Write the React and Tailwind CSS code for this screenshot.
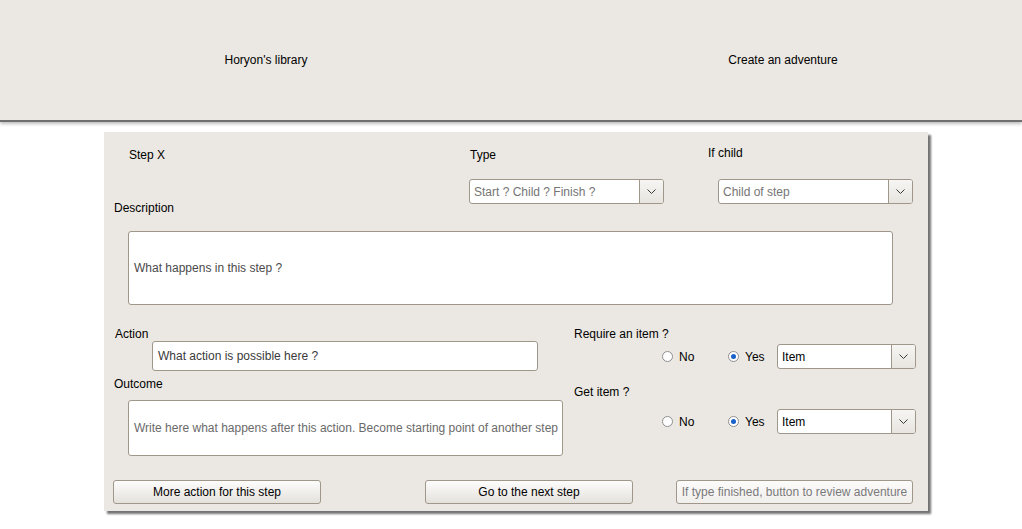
import React from "react";

const font = { fontFamily: '"Liberation Sans", Arial, sans-serif' };

function Chevron() {
  return (
    <svg width="9" height="6" viewBox="0 0 9 6" className="block">
      <path d="M0.5 0.5 L4.5 4.5 L8.5 0.5" fill="none" stroke="#3a3a3a" strokeWidth="1" />
    </svg>
  );
}

function Select({ text, w, muted }) {
  return (
    <div className={`flex h-[25px] ${w} overflow-hidden rounded-[3px] border border-[#a0978b] bg-white`}>
      <div className={`flex flex-1 items-center pl-[4px] text-[12px] ${muted ? "text-[#757575]" : "text-black"}`}>
        {text}
      </div>
      <div className="flex w-[24px] items-center justify-center border-l border-[#a0978b] bg-gradient-to-b from-[#f6f5f3] to-[#e8e5e0]">
        <Chevron />
      </div>
    </div>
  );
}

function Radio({ checked }) {
  return (
    <span className="flex h-[11px] w-[11px] items-center justify-center rounded-full border border-[#8f8f8f] bg-white">
      {checked && <span className="h-[5px] w-[5px] rounded-full bg-[#1a62c9]" />}
    </span>
  );
}

function ItemRow({ mt }) {
  return (
    <div className={`flex h-[25px] items-center ${mt}`}>
      <div className="ml-[88px] flex w-[66px] items-center gap-[6px]">
        <Radio />
        <span>No</span>
      </div>
      <div className="flex w-[49px] items-center gap-[6px]">
        <Radio checked />
        <span>Yes</span>
      </div>
      <Select text="Item" w="w-[139px]" />
    </div>
  );
}

function Button({ label, w, ml, faded }) {
  return (
    <div
      className={`flex h-[24px] ${w} ${ml} items-center justify-center rounded-[3px] border border-[#a0978b] bg-gradient-to-b ${
        faded ? "from-[#fbfbfa] to-[#f1efec] text-[#7a7a7a]" : "from-[#fdfdfc] to-[#e4e1dc] text-black"
      }`}
    >
      {label}
    </div>
  );
}

export default function App() {
  return (
    <div className="min-h-screen bg-white text-[12px] leading-[14px] text-black" style={font}>
      <div className="flex h-[122px] items-center border-b-2 border-[#6f6f6f] bg-[#ebe8e3] shadow-[0_2px_3px_rgba(0,0,0,0.25)]">
        <div className="w-[532px] text-center">Horyon's library</div>
        <div className="w-[490px] pl-[12px] text-center">Create an adventure</div>
      </div>

      <div className="ml-[104px] mt-[10px] h-[379px] w-[824px] bg-[#ebe8e3] shadow-[3px_3px_2px_rgba(0,0,0,0.55)]">
        <div className="flex pt-[16px]">
          <div className="w-[365px]">
            <div className="pl-[25px]">Step X</div>
            <div className="mt-[39px] pl-[10px]">Description</div>
          </div>
          <div className="w-[239px]">
            <div className="pl-[1px]">Type</div>
            <div className="mt-[17px]">
              <Select text="Start ? Child ? Finish ?" w="w-[195px]" muted />
            </div>
          </div>
          <div className="-mt-[2px]">
            <div>If child</div>
            <div className="ml-[10px] mt-[19px]">
              <Select text="Child of step" w="w-[195px]" muted />
            </div>
          </div>
        </div>

        <div className="ml-[24px] mt-[16px] flex h-[74px] w-[765px] items-center rounded-[3px] border border-[#a0978b] bg-white pl-[5px] text-[#4a4a4a]">
          What happens in this step ?
        </div>

        <div className="mt-[22px] flex items-start">
          <div className="w-[466px]">
            <div className="pl-[11px]">Action</div>
            <div className="ml-[48px] flex h-[30px] w-[386px] items-center rounded-[3px] border border-[#a0978b] bg-white pl-[5px] text-[#3a3a3a]">
              What action is possible here ?
            </div>
            <div className="mt-[6px] pl-[10px]">Outcome</div>
            <div className="ml-[24px] mt-[9px] flex h-[56px] w-[435px] items-center rounded-[3px] border border-[#a0978b] bg-white pl-[5px] text-[#6a6a6a]">
              Write here what happens after this action. Become starting point of another step
            </div>
          </div>
          <div className="pl-[4px]">
            <div>Require an item ?</div>
            <ItemRow mt="mt-[3px]" />
            <div className="mt-[16px]">Get item ?</div>
            <ItemRow mt="mt-[10px]" />
          </div>
        </div>

        <div className="mt-[24px] flex">
          <Button label="More action for this step" w="w-[208px]" ml="ml-[9px]" />
          <Button label="Go to the next step" w="w-[208px]" ml="ml-[104px]" />
          <Button label="If type finished, button to review adventure" w="w-[237px]" ml="ml-[43px]" faded />
        </div>
      </div>
    </div>
  );
}
